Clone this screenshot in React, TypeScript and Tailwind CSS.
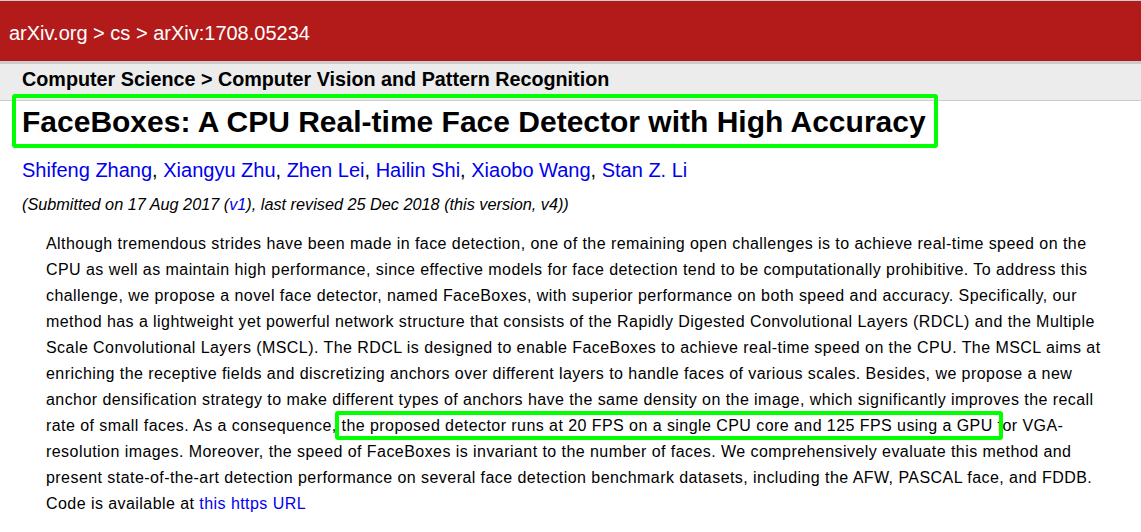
import React from "react";

const authors = [
  "Shifeng Zhang",
  "Xiangyu Zhu",
  "Zhen Lei",
  "Hailin Shi",
  "Xiaobo Wang",
  "Stan Z. Li",
];

const App = () => {
  return (
    <div className="min-h-[532px] bg-white font-['Liberation_Sans',Arial,sans-serif] text-black">
      <div className="h-[61px] bg-[#b31b1b] border-t border-[#c8ccd6] flex items-center pl-[9px] pt-[4px] text-white text-[20px]">
        arXiv.org &gt; cs &gt; arXiv:1708.05234
      </div>
      <div className="h-[40px] bg-[#ececec] border-t-[3px] border-b border-t-[#cccccc] border-b-[#cccccc] flex items-center pl-[22px] pb-[4px] font-bold text-[19.75px]">
        Computer Science &gt; Computer Vision and Pattern Recognition
      </div>

      <div className="pl-[22px]">
        <h1 className="relative inline-block mt-[3px] text-[30px] font-bold leading-[36px]">
          FaceBoxes: A CPU Real-time Face Detector with High Accuracy
          <span className="absolute -left-[10px] -right-[12px] -top-[10px] -bottom-[8px] rounded-[3px] border-4 border-[#00ff00]" />
        </h1>

        <div className="mt-[18px] text-[20px] leading-[24px]">
          {authors.map((a, i) => (
            <span key={a}>
              <a className="text-[#0000ee]">{a}</a>
              {i < authors.length - 1 ? ", " : ""}
            </span>
          ))}
        </div>

        <div className="mt-[12px] text-[16.25px] italic leading-[20px]">
          (Submitted on 17 Aug 2017 (<a className="text-[#0000ee]">v1</a>), last revised 25 Dec 2018 (this version, v4))
        </div>
      </div>

      <p className="mt-[17px] ml-[46px] w-[1064px] text-[16px] tracking-[0.44px] leading-[26px]">
        Although tremendous strides have been made in face detection, one of the remaining open challenges is to achieve real-time speed on the CPU as well as maintain high performance, since effective models for face detection tend to be computationally prohibitive. To address this challenge, we propose a novel face detector, named FaceBoxes, with superior performance on both speed and accuracy. Specifically, our method has a lightweight yet powerful network structure that consists of the Rapidly Digested Convolutional Layers (RDCL) and the Multiple Scale Convolutional Layers (MSCL). The RDCL is designed to enable FaceBoxes to achieve real-time speed on the CPU. The MSCL aims at enriching the receptive fields and discretizing anchors over different layers to handle faces of various scales. Besides, we propose a new anchor densification strategy to make different types of anchors have the same density on the image, which significantly improves the recall rate of small faces. As a consequence,{" "}
        <span className="relative">
          the proposed detector runs at 20 FPS on a single CPU core and 125 FPS using a GPU
          <span className="absolute -left-[7px] -right-[10px] -top-[6px] -bottom-[6px] rounded-[3px] border-4 border-[#00ff00]" />
        </span>{" "}
        for VGA-resolution images. Moreover, the speed of FaceBoxes is invariant to the number of faces. We comprehensively evaluate this method and present state-of-the-art detection performance on several face detection benchmark datasets, including the AFW, PASCAL face, and FDDB. Code is available at{" "}
        <a className="text-[#0000ee]">this https URL</a>
      </p>
    </div>
  );
};

export default App;
